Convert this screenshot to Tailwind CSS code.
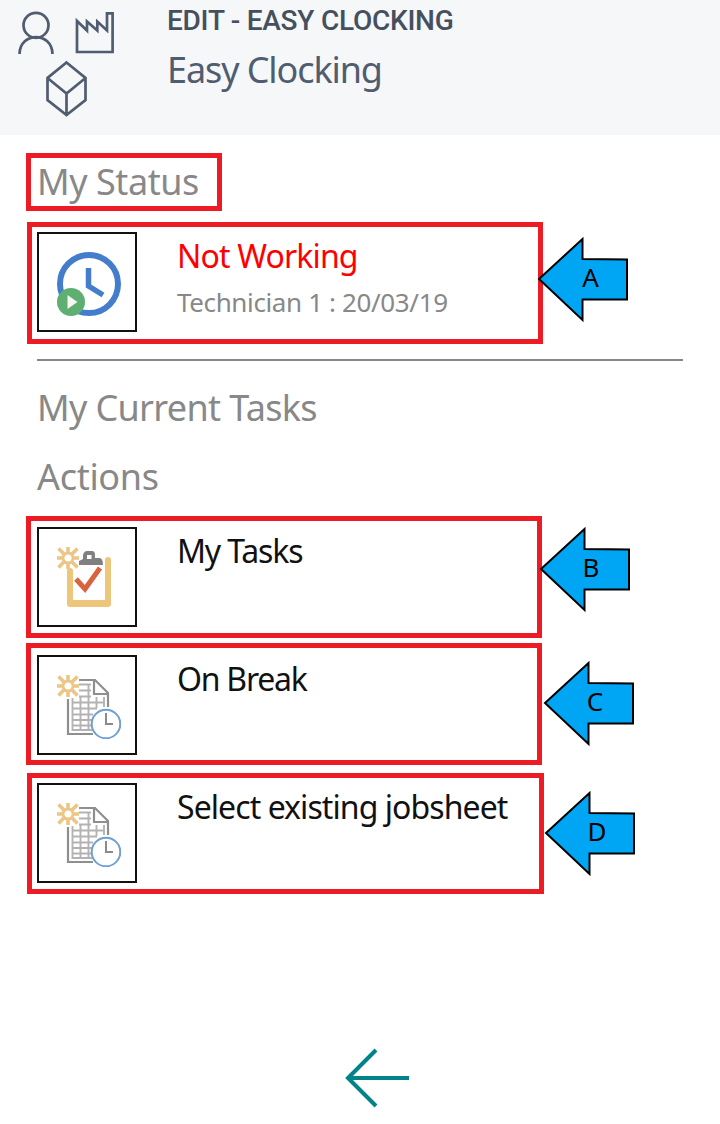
<!DOCTYPE html>
<html lang="en">
<head>
<meta charset="utf-8">
<title>Easy Clocking</title>
<script src="https://cdn.jsdelivr.net/npm/@tailwindcss/browser@4"></script>
</head>
<body class="bg-white">
<svg class="hidden">
  <defs>
    <g id="sun" stroke="#edc585" stroke-width="3.6" fill="none">
      <circle cx="11" cy="11" r="5" stroke-width="2.8"/>
      <path d="M11 0V6M11 16V22M0 11H6M16 11H22M1.5 1.5L7.2 7.2M14.8 14.8L20.5 20.5M20.5 1.5L14.8 7.2M1.5 20.5L7.2 14.8"/>
    </g>
    <g id="sheet" fill="none">
      <path d="M11 24V59H36M22 5H38L51 18V32" stroke="#8f8f8f" stroke-width="2.200"/>
      <path d="M37 5V19H51" stroke="#8f8f8f" stroke-width="2.200"/>
      <path d="M22 9.500H34M22 15.500H34M22 21.500H34M15 27.500H47M15 33.500H40M15 39.500H36M15 45H35M15 50.500H35M15 55H35M15.500 23V56M23.500 22V56M31.500 9V56M39.500 22V33M47 22V32" stroke="#b3b3b3" stroke-width="1.900"/>
      <circle cx="49" cy="49" r="14.300" fill="#fff" stroke="#6f9fd3" stroke-width="2"/>
      <path d="M49 38V49H56" stroke="#8b8b8b" stroke-width="2"/>
      <use href="#sun"/>
    </g>
    <path id="callout" d="M2 42L45.500 2V22L90 22.500V62.500H45.500V83Z" fill="#00a5f3" stroke="#000" stroke-width="2"/>
  </defs>
</svg>
<div class="flex h-[1124px] w-[720px] flex-col overflow-hidden font-['Noto_Sans','Liberation_Sans',sans-serif]">
  <header class="flex h-[135px] shrink-0 bg-[#f5f7f9]">
    <svg class="h-[135px] w-[167px] shrink-0" viewBox="0 0 167 135" fill="none" stroke="#505c70" stroke-width="2.700">
      <circle cx="36" cy="25.300" r="12.500"/>
      <path d="M19.500 54C20 31.500 52 31.500 52.500 54"/>
      <path d="M77 52V21L87 30.500V21.500L97.300 30.500V21.500L107 30.500V13.300H112.600V52Z"/>
      <path d="M66.500 62.500L85.500 78V100L66.500 115L47.500 100V78ZM47.500 78L66.500 93.500L85.500 78M66.500 93.500V115"/>
    </svg>
    <div class="flex flex-col whitespace-nowrap">
      <div class="mt-[3px] h-9 font-['Roboto',sans-serif] text-[28px] leading-9 font-medium tracking-[-0.25px] text-[#454f5e]"><span>EDIT - EASY CLOCKING</span></div>
      <div class="mt-[5px] h-[52px] text-[36px] leading-[52px] tracking-[-1.1px] text-[#505c70]"><span>Easy Clocking</span></div>
    </div>
  </header>
  <main class="flex flex-col whitespace-nowrap text-[#888]">
    <h2 class="mt-[18px] ml-[26px] flex h-[58px] w-[196px] items-center border-5 border-[#ed1c24] pl-1.5 text-[36px] leading-none tracking-[-0.45px]"><span>My Status</span></h2>
    <section class="mt-[11px] ml-[27px] flex h-[122px]">
      <div class="flex w-[516px] shrink-0 border-5 border-[#ed1c24] p-[5px]">
        <div class="flex size-[100px] shrink-0 border-2 border-[#111] pt-[18px] pl-[18px]">
          <svg class="size-16 shrink-0" viewBox="0 0 64 64" fill="none">
            <circle cx="32" cy="32" r="29" stroke="#437dcc" stroke-width="6"/>
            <path d="M31.500 16V34L46 43" stroke="#437dcc" stroke-width="5.500"/>
            <circle cx="14" cy="50" r="14" fill="#5fae72"/>
            <path d="M10.500 43V57L20.500 50Z" fill="#f4f7f2"/>
          </svg>
        </div>
        <div class="ml-10 flex flex-col">
          <div class="h-12 text-[32px] leading-12 tracking-[-0.85px] text-[#f00]"><span>Not Working</span></div>
          <div class="mt-1 h-9 text-[26px] leading-9 tracking-[-0.37px]"><span>Technician 1 : 20/03/19</span></div>
        </div>
      </div>
      <svg class="mt-[15px] -ml-[6px] h-[86px] w-[93px] shrink-0" viewBox="0 0 93 86"><use href="#callout"/><text x="53.500" y="50" text-anchor="middle" font-size="26">A</text></svg>
    </section>
    <div class="mt-[15px] ml-[37px] h-0.5 w-[646px] bg-[#888]"></div>
    <h2 class="mt-[21px] ml-[37px] h-[52px] text-[36px] leading-[52px] tracking-[-0.65px]"><span>My Current Tasks</span></h2>
    <h2 class="mt-[17px] ml-[37px] h-[52px] text-[36px] leading-[52px] tracking-[-0.3px]"><span>Actions</span></h2>
    <section class="mt-[13px] ml-[26px] flex h-[122px] text-[#111]">
      <div class="flex w-[516px] shrink-0 border-5 border-[#ed1c24] p-1.5">
        <div class="flex size-[100px] shrink-0 border-2 border-[#111] pt-[18px] pl-[18px]">
          <svg class="size-16 shrink-0" viewBox="0 0 64 64" fill="none">
            <path d="M13 24V57H51V13" stroke="#edc67c" stroke-width="6" stroke-linejoin="round" stroke-linecap="round"/>
            <path d="M13 56.500H51" stroke="#edc67c" stroke-width="7"/>
            <path d="M22 18V14L26 12V8Q27 4 30 4H35Q38 4 38 8V11H43Q46 12 46 18Z" fill="#808080"/>
            <rect x="30" y="8" width="4.500" height="4" fill="#fff"/>
            <path d="M19 32L28 42L43 21" stroke="#d9633f" stroke-width="5"/>
            <use href="#sun"/>
          </svg>
        </div>
        <div class="ml-10 h-12 text-[32px] leading-12 tracking-[-1.15px]"><span>My Tasks</span></div>
      </div>
      <svg class="mt-[11px] -ml-[3px] h-[86px] w-[93px] shrink-0" viewBox="0 0 93 86"><use href="#callout"/><text x="52" y="50" text-anchor="middle" font-size="26">B</text></svg>
    </section>
    <section class="mt-[5px] ml-[26px] flex h-[122px] text-[#111]">
      <div class="flex w-[516px] shrink-0 border-5 border-[#ed1c24] px-1.5 py-[7px]">
        <div class="flex size-[100px] shrink-0 border-2 border-[#111] pt-[18px] pl-[18px]">
          <svg class="size-16 shrink-0" viewBox="0 0 64 64"><use href="#sheet"/></svg>
        </div>
        <div class="ml-10 h-12 text-[32px] leading-12 tracking-[-1.25px]"><span>On Break</span></div>
      </div>
      <svg class="mt-[18px] ml-px h-[86px] w-[93px] shrink-0" viewBox="0 0 93 86"><use href="#callout"/><text x="52" y="50" text-anchor="middle" font-size="26">C</text></svg>
    </section>
    <section class="mt-2 ml-[27px] flex h-[121px] text-[#111]">
      <div class="flex w-[517px] shrink-0 border-5 border-[#ed1c24] p-[5px]">
        <div class="flex size-[100px] shrink-0 border-2 border-[#111] pt-[18px] pl-[18px]">
          <svg class="size-16 shrink-0" viewBox="0 0 64 64"><use href="#sheet"/></svg>
        </div>
        <div class="ml-10 h-12 text-[32px] leading-12 tracking-[-0.93px]"><span>Select existing jobsheet</span></div>
      </div>
      <svg class="mt-[18px] h-[86px] w-[93px] shrink-0" viewBox="0 0 93 86"><use href="#callout"/><text x="53" y="50" text-anchor="middle" font-size="26">D</text></svg>
    </section>
  </main>
  <footer class="mt-[154px] ml-[345px]">
    <svg class="h-[60px] w-[66px]" viewBox="0 0 66 60" fill="none" stroke="#008489" stroke-width="4"><path d="M31 2L3 30L31 58M3 30H64"/></svg>
  </footer>
</div>
</body>
</html>
